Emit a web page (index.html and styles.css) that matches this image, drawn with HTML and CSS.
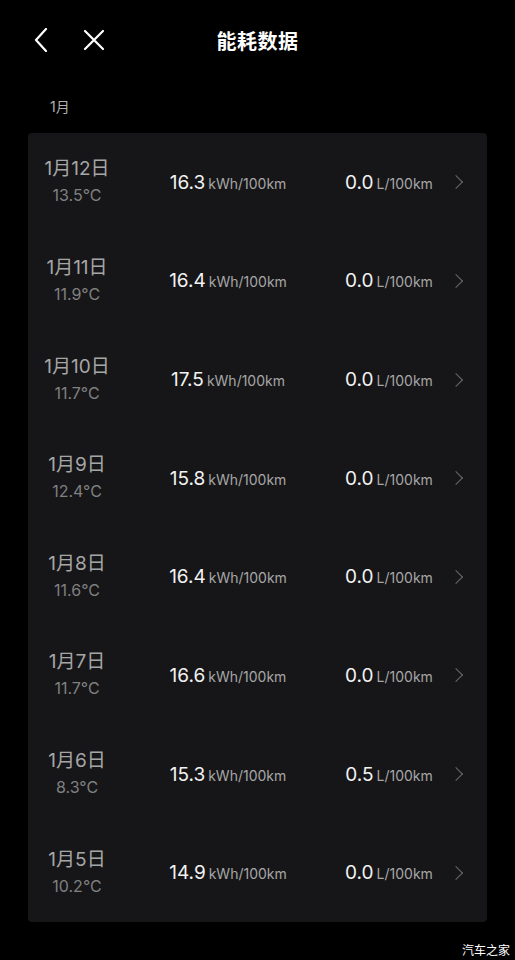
FILE: index.html
```html
<!DOCTYPE html>
<html lang="zh-CN">
<head>
    <meta charset="UTF-8">
    <meta name="viewport" content="width=device-width, initial-scale=1.0">
    <title>能耗数据</title>
    <link rel="stylesheet" href="styles.css">
</head>
<body>
    <header class="top-bar">
        <div class="nav-icons">
            <!-- Back -->
            <svg class="icon back" width="14" height="24" viewBox="0 0 14 24">
                <path d="M12 1 L2 12 L12 23" fill="none" stroke="#fff" stroke-width="2.2" stroke-linecap="round" stroke-linejoin="round"/>
            </svg>
            <!-- Close -->
            <svg class="icon close" width="22" height="22" viewBox="0 0 22 22">
                <path d="M2 2 L20 20 M20 2 L2 20" fill="none" stroke="#fff" stroke-width="2.2" stroke-linecap="round"/>
            </svg>
        </div>
        <h1>能耗数据</h1>
    </header>

    <div class="month">1月</div>

    <div class="card">
        <div class="row">
            <div class="date"><span class="day">1月12日</span><span class="temp">13.5°C</span></div>
            <div class="val"><b>16.3</b><small>kWh/100km</small></div>
            <div class="val"><b>0.0</b><small>L/100km</small></div>
            <span class="arrow"></span>
        </div>
        <div class="row">
            <div class="date"><span class="day">1月11日</span><span class="temp">11.9°C</span></div>
            <div class="val"><b>16.4</b><small>kWh/100km</small></div>
            <div class="val"><b>0.0</b><small>L/100km</small></div>
            <span class="arrow"></span>
        </div>
        <div class="row">
            <div class="date"><span class="day">1月10日</span><span class="temp">11.7°C</span></div>
            <div class="val"><b>17.5</b><small>kWh/100km</small></div>
            <div class="val"><b>0.0</b><small>L/100km</small></div>
            <span class="arrow"></span>
        </div>
        <div class="row">
            <div class="date"><span class="day">1月9日</span><span class="temp">12.4°C</span></div>
            <div class="val"><b>15.8</b><small>kWh/100km</small></div>
            <div class="val"><b>0.0</b><small>L/100km</small></div>
            <span class="arrow"></span>
        </div>
        <div class="row">
            <div class="date"><span class="day">1月8日</span><span class="temp">11.6°C</span></div>
            <div class="val"><b>16.4</b><small>kWh/100km</small></div>
            <div class="val"><b>0.0</b><small>L/100km</small></div>
            <span class="arrow"></span>
        </div>
        <div class="row">
            <div class="date"><span class="day">1月7日</span><span class="temp">11.7°C</span></div>
            <div class="val"><b>16.6</b><small>kWh/100km</small></div>
            <div class="val"><b>0.0</b><small>L/100km</small></div>
            <span class="arrow"></span>
        </div>
        <div class="row">
            <div class="date"><span class="day">1月6日</span><span class="temp">8.3°C</span></div>
            <div class="val"><b>15.3</b><small>kWh/100km</small></div>
            <div class="val"><b>0.5</b><small>L/100km</small></div>
            <span class="arrow"></span>
        </div>
        <div class="row">
            <div class="date"><span class="day">1月5日</span><span class="temp">10.2°C</span></div>
            <div class="val"><b>14.9</b><small>kWh/100km</small></div>
            <div class="val"><b>0.0</b><small>L/100km</small></div>
            <span class="arrow"></span>
        </div>
    </div>

    <div class="watermark">汽车之家</div>
</body>
</html>
```

FILE: styles.css
```css
body {
    margin: 0;
    background: #000;
    color: #fff;
    font-family: Inter, "Noto Sans CJK SC", sans-serif;
    width: 515px;
    height: 960px;
    overflow: hidden;
    position: relative;
}

/* Header */
.top-bar {
    height: 80px;
    display: flex;
    align-items: center;
    justify-content: center;
    position: relative;
}

.nav-icons {
    position: absolute;
    left: 34px;
    top: 28px;
    display: flex;
    align-items: center;
    gap: 35px;
}

.top-bar h1 {
    margin: 0;
    font-size: 20px;
    font-weight: 700;
    letter-spacing: 0.5px;
    font-family: "Noto Sans CJK SC", sans-serif;
}

.month {
    padding: 16px 0 0 50px;
    height: 37px;
    font-size: 14px;
    color: #b0b0b0;
}

/* List card */
.card {
    margin: 0 28px;
    background: #161618;
    border-radius: 4px;
    height: 789px;
    display: flex;
    flex-direction: column;
}

.row {
    flex: 1;
    display: grid;
    grid-template-columns: 98px 204px 118px 17px;
    align-items: center;
    padding-right: 22px;
}

.date {
    display: flex;
    flex-direction: column;
    align-items: center;
}

.day {
    font-size: 19px;
    color: #a6a6a6;
    line-height: 26px;
}

.temp {
    font-size: 16px;
    color: #808080;
    line-height: 26px;
}

.val {
    text-align: center;
    white-space: nowrap;
}

.val b {
    font-weight: 400;
    font-size: 19px;
    color: #f2f2f2;
}

.val small {
    font-size: 14px;
    color: #a6a6a6;
    margin-left: 3px;
}

.arrow {
    justify-self: end;
    width: 9px;
    height: 9px;
    border-top: 1.5px solid #6a6a6a;
    border-right: 1.5px solid #6a6a6a;
    transform: rotate(45deg);
    margin-right: 4px;
}

.watermark {
    position: absolute;
    right: 5px;
    bottom: 2px;
    font-size: 12px;
    color: #fff;
    font-family: "Noto Sans CJK SC", sans-serif;
}
```
